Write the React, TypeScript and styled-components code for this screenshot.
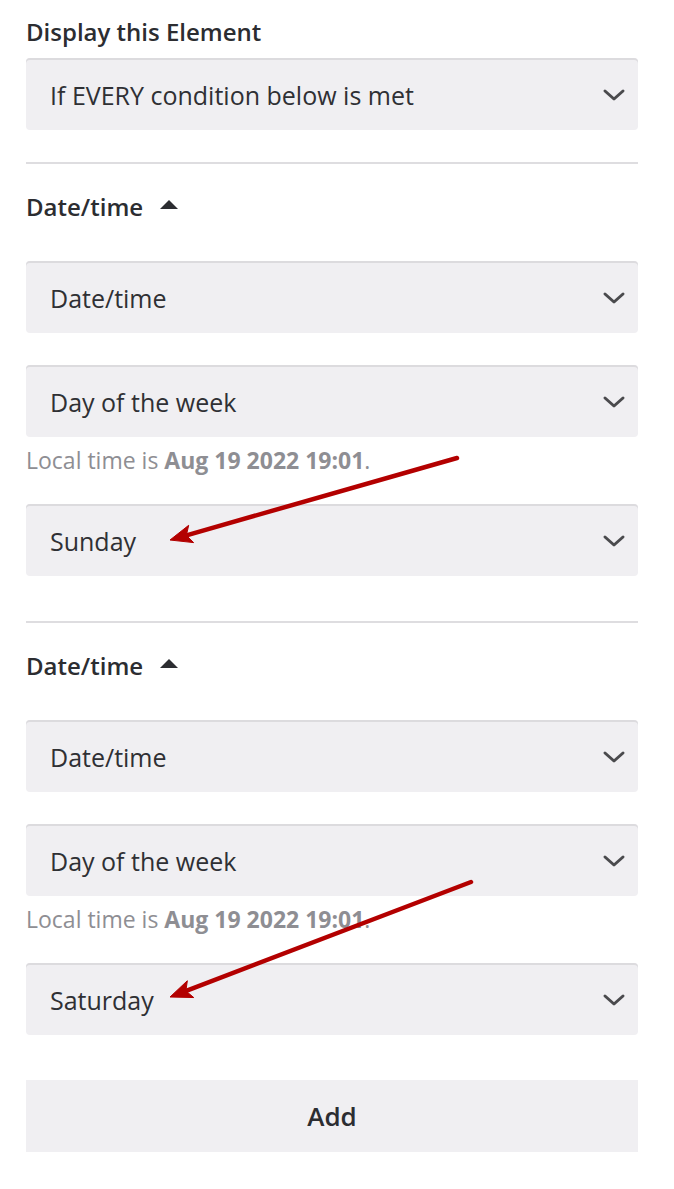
import styled, { createGlobalStyle } from "styled-components";

const GlobalStyle = createGlobalStyle`
  body {
    margin: 0;
    background: #ffffff;
    font-family: "Open Sans", "Noto Sans", sans-serif;
    color: #2f3034;
  }
`;

const Page = styled.div`
  position: relative;
  width: 674px;
  min-height: 1189px;
  padding: 16px 36px 0 26px;
  box-sizing: border-box;
`;

const Heading = styled.div<{ $top?: number }>`
  display: flex;
  align-items: center;
  gap: 17px;
  height: 30px;
  margin-top: ${(p) => p.$top ?? 0}px;
  font-size: 24px;
  font-weight: 600;
  color: #2c2d31;
`;

const Caret = styled.span`
  width: 0;
  height: 0;
  border-left: 9px solid transparent;
  border-right: 9px solid transparent;
  border-bottom: 9px solid #2c2d31;
  margin-top: -4px;
`;

const Select = styled.div<{ $top: number }>`
  display: flex;
  align-items: center;
  justify-content: space-between;
  height: 72px;
  margin-top: ${(p) => p.$top}px;
  padding: 2px 12px 0 24px;
  box-sizing: border-box;
  background: #f0eff2;
  border-radius: 4px;
  box-shadow: inset 0 2px 0 #dcdbde;
  font-size: 25px;
  color: #2f3034;
`;

const Divider = styled.hr<{ $top: number }>`
  margin: ${(p) => p.$top}px 0 0;
  border: none;
  height: 2px;
  background: #dedde0;
`;

const Help = styled.div`
  height: 24px;
  line-height: 24px;
  margin-top: 11px;
  font-size: 23px;
  color: #8e8e93;

  b {
    font-weight: 700;
  }
`;

const AddButton = styled.button`
  display: block;
  width: 100%;
  height: 72px;
  margin-top: 45px;
  border: none;
  background: #f0eff2;
  font-family: inherit;
  font-size: 26px;
  font-weight: 600;
  color: #2c2d31;
`;

const Overlay = styled.svg`
  position: absolute;
  left: 0;
  top: 0;
  pointer-events: none;
`;

function Chevron() {
  return (
    <svg width="24" height="14" viewBox="0 0 24 14">
      <path
        d="M3 3 L12 11 L21 3"
        fill="none"
        stroke="#4a4a4d"
        strokeWidth="3"
        strokeLinecap="round"
        strokeLinejoin="round"
      />
    </svg>
  );
}

function Field({ label, top }: { label: string; top: number }) {
  return (
    <Select $top={top}>
      <span>{label}</span>
      <Chevron />
    </Select>
  );
}

function Arrow({ x1, y1, x2, y2 }: { x1: number; y1: number; x2: number; y2: number }) {
  const dx = x2 - x1;
  const dy = y2 - y1;
  const len = Math.hypot(dx, dy);
  const ux = dx / len;
  const uy = dy / len;
  const head = 22;
  const half = 9;
  const bx = x2 - ux * head;
  const by = y2 - uy * head;
  const px = -uy;
  const py = ux;
  return (
    <g fill="#b30000" stroke="#b30000">
      <line x1={x1} y1={y1} x2={bx + ux * 4} y2={by + uy * 4} strokeWidth="4.5" strokeLinecap="round" />
      <polygon
        points={`${x2},${y2} ${bx + px * half},${by + py * half} ${bx + ux * 5},${by + uy * 5} ${bx - px * half},${by - py * half}`}
        strokeWidth="1"
        strokeLinejoin="round"
      />
    </g>
  );
}

const conditions = [{ value: "Sunday" }, { value: "Saturday" }];

export default function App() {
  return (
    <>
      <GlobalStyle />
      <Page>
        <Heading>Display this Element</Heading>
        <Field label="If EVERY condition below is met" top={12} />
        <Divider $top={32} />
        {conditions.map((c, i) => (
          <div key={i}>
            {i > 0 && <Divider $top={45} />}
            <Heading $top={27}>
              Date/time <Caret />
            </Heading>
            <Field label="Date/time" top={40} />
            <Field label="Day of the week" top={32} />
            <Help>
              Local time is <b>Aug 19 2022 19:01</b>.
            </Help>
            <Field label={c.value} top={32} />
          </div>
        ))}
        <AddButton>Add</AddButton>
        <Overlay width="674" height="1189">
          <Arrow x1={457} y1={458} x2={170} y2={540} />
          <Arrow x1={471} y1={882} x2={170} y2={997} />
        </Overlay>
      </Page>
    </>
  );
}
